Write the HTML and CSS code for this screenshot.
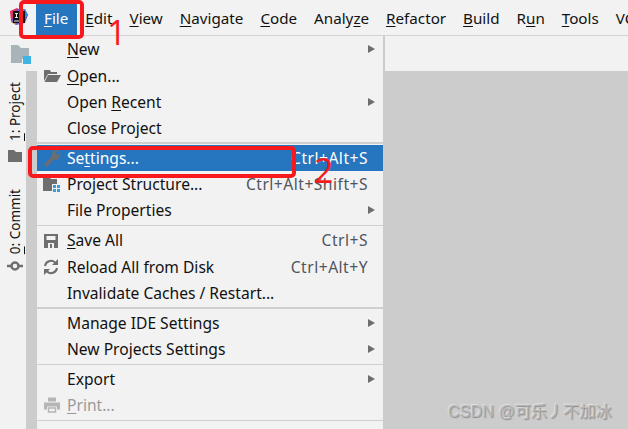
FILE: index.html
```html
<!DOCTYPE html>
<html lang="en">
<head>
<meta charset="utf-8">
<title>File menu</title>
<link rel="stylesheet" href="styles.css">
</head>
<body>
<div class="ide">
  <header class="menubar">
    <svg class="logo" width="20" height="18" viewBox="0 0 20 18"><path d="M1 3 8 0l5 3-6 12-5-2z" fill="#e0355f"/><path d="M8 1h8l3 6-3 8-9 2-5-3z" fill="#6b57d2"/><path d="M13 1h3l3 6-3 3z" fill="#2a8fd8"/><path d="M2 13l3 3h2z" fill="#f0a030"/><rect x="4" y="3" width="12" height="12" fill="#111"/><rect x="5" y="12.500" width="6" height="1" fill="#eee"/><rect x="6" y="5" width="3" height="1" fill="#eee"/><rect x="7" y="5" width="1" height="5" fill="#eee"/><rect x="6" y="9" width="3" height="1" fill="#eee"/><rect x="10" y="5" width="3" height="1" fill="#eee"/><rect x="12" y="5" width="1" height="5" fill="#eee"/></svg>
    <nav class="menus">
      <span class="menu active"><u>F</u>ile</span>
      <span class="menu"><u>E</u>dit</span>
      <span class="menu"><u>V</u>iew</span>
      <span class="menu"><u>N</u>avigate</span>
      <span class="menu"><u>C</u>ode</span>
      <span class="menu">Analy<u>z</u>e</span>
      <span class="menu"><u>R</u>efactor</span>
      <span class="menu"><u>B</u>uild</span>
      <span class="menu">R<u>u</u>n</span>
      <span class="menu"><u>T</u>ools</span>
      <span class="menu">VC<u>S</u></span>
    </nav>
  </header>
  <div class="body">
    <aside class="rail">
      <div class="rail-top">
        <svg width="22" height="20" viewBox="0 0 22 20"><path d="M1 1h7l3 3h8v11h-7v4H1z" fill="#a9b4ba"/><rect x="13" y="12" width="8" height="8" fill="#41b4e6"/></svg>
      </div>
      <div class="tab tab-project"><span class="vtext"><u>1</u>: Project</span></div>
      <svg class="rail-folder" width="16" height="14" viewBox="0 0 16 14"><path d="M1 1h6l2 2h6v10H1z" fill="#6e6e6e"/></svg>
      <div class="tab tab-commit"><span class="vtext"><u>0</u>: Commit</span></div>
      <svg class="rail-commit" width="18" height="10" viewBox="0 0 18 10"><path d="M1 5h16" stroke="#6e6e6e" stroke-width="2.500"/><circle cx="9" cy="5" r="3.500" fill="#f2f2f2" stroke="#6e6e6e" stroke-width="2.500"/></svg>
    </aside>
    <div class="gutter"></div>
    <section class="dropdown">
      <div class="item"><span class="label"><u>N</u>ew</span><i class="arrow"></i></div>
      <div class="item"><svg class="icon" width="18" height="14" viewBox="0 0 18 14"><path d="M1 1h6l1 2h6v2H5L1 12z" fill="#6e6e6e"/><path d="M5 6h13l-4 7H1.500z" fill="#6e6e6e"/></svg><span class="label"><u>O</u>pen...</span></div>
      <div class="item"><span class="label">Open <u>R</u>ecent</span><i class="arrow"></i></div>
      <div class="item"><span class="label">Close Project</span></div>
      <hr class="sep thick">
      <div class="item selected"><svg class="icon" width="18" height="18" viewBox="0 0 17 17"><path d="M1 14.500 8.500 7C8 3.500 10.500 .500 15 1l-3 3 1 2 3.500-2c.5 4-3 7-6.500 6L3.500 17z" fill="#6e6e6e"/></svg><span class="label">Se<u>t</u>tings...</span><span class="key">Ctrl+Alt+S</span></div>
      <div class="item"><svg class="icon" width="18" height="16" viewBox="0 0 18 16"><path d="M0 1h6l2 2h6v5H9v7H0z" fill="#6e6e6e"/><path d="M10 9h3v3h-3zM14 9h3v3h-3zM10 13h3v3h-3zM14 13h3v3h-3z" fill="#3f9bd8"/></svg><span class="label">Project Structure...</span><span class="key">Ctrl+Alt+Shift+S</span></div>
      <div class="item"><span class="label">File Properties</span><i class="arrow"></i></div>
      <hr class="sep">
      <div class="item"><svg class="icon" width="16" height="16" viewBox="0 0 16 16"><path d="M1 1h14v14H1z" fill="#6e6e6e"/><path d="M3.500 3h9v4h-9zM5 10h6v5H5z" fill="#f2f2f2"/><path d="M7 11h2v4H7z" fill="#6e6e6e"/></svg><span class="label"><u>S</u>ave All</span><span class="key">Ctrl+S</span></div>
      <div class="item"><svg class="icon" width="16" height="16" viewBox="0 0 16 16"><path d="M2 7a6 6 0 0 1 10-3.500M14 9a6 6 0 0 1-10 3.500" fill="none" stroke="#6e6e6e" stroke-width="2"/><path d="M9 6h6V0zM7 10H1v6z" fill="#6e6e6e"/></svg><span class="label">Reload All from Disk</span><span class="key">Ctrl+Alt+Y</span></div>
      <div class="item"><span class="label">Invalidate Caches / Restart...</span></div>
      <hr class="sep thick">
      <div class="item"><span class="label">Manage IDE Settings</span><i class="arrow"></i></div>
      <div class="item"><span class="label">New Projects Settings</span><i class="arrow"></i></div>
      <hr class="sep">
      <div class="item"><span class="label">Export</span><i class="arrow"></i></div>
      <div class="item disabled"><svg class="icon" width="18" height="17" viewBox="0 0 18 17"><path d="M5 1h8v4H5zM1 6h16v7h-3v-3H4v3H1z" fill="#b5b5b5"/><path d="M5.500 11.500h7v4h-7z" fill="none" stroke="#b5b5b5" stroke-width="1.500"/></svg><span class="label"><u>P</u>rint...</span></div>
      <hr class="sep">
    </section>
    <main class="editor">
      <div class="toolbar"></div>
      <div class="canvas"></div>
    </main>
  </div>
  <div class="mark mark-file"></div>
  <div class="mark mark-settings"></div>
  <span class="num num-1">1</span>
  <span class="num num-2">2</span>
  <span class="watermark">CSDN @可乐丿不加冰</span>
</div>
</body>
</html>
```
FILE: styles.css
```css
* { box-sizing: border-box; }
html, body { margin: 0; padding: 0; }
body { background: #f2f2f2; font-family: "Noto Sans", "Open Sans", sans-serif; color: #111; }
.ide { position: relative; width: 628px; height: 429px; overflow: hidden; background: #f2f2f2; font-size: 15.600px; }
u { text-underline-offset: 2px; text-decoration-thickness: 1px; }

.menubar { height: 36px; display: flex; align-items: center; border-bottom: 1px solid #d4d4d4; }
.logo { margin-left: 9px; margin-top: -2px; flex: none; }
.menus { display: flex; margin-left: 6.500px; height: 35px; white-space: nowrap; font-size: 15.200px; }
.menu { padding: 0 8.500px; height: 35px; line-height: 37px; }
.menu.active { background: #2675bf; color: #fff; }

.body { display: flex; height: 393px; }
.rail { width: 26px; flex: none; display: flex; flex-direction: column; align-items: center; padding-left: 4px; }
.rail-top { height: 35px; width: 36px; flex: none; display: flex; justify-content: center; align-items: center; margin-left: 12px; }
.tab { display: flex; justify-content: center; flex: none; }
.vtext { writing-mode: vertical-rl; transform: rotate(180deg); font-size: 13.500px; white-space: nowrap; line-height: 22px; }
.tab-project { margin-top: 11px; }
.rail-folder { margin-top: 8px; flex: none; }
.tab-commit { margin-top: 26px; }
.rail-commit { margin-top: 7px; flex: none; }

.gutter { width: 11px; flex: none; background: #cccccc; margin-top: 35px; }
.dropdown { width: 346px; flex: none; height: 393px; background: #f2f2f2; padding-top: .600px; }
.item { height: 26.200px; display: flex; align-items: center; position: relative; padding: 0 15px .400px 30px; white-space: nowrap; }
.label { flex: 1; }
.key { color: #50555c; letter-spacing: .5px; }
.item.selected { background: #2675bf; color: #fff; }
.item.selected .key { color: #fff; }
.item.disabled { color: #9a9a9a; }
.icon { position: absolute; left: 6px; top: 50%; transform: translateY(-50%); }
.arrow { width: 0; height: 0; margin-right: -7px; border-left: 7.500px solid #6e6e6e; border-top: 4.500px solid transparent; border-bottom: 4.500px solid transparent; }
.sep { border: 0; margin: 1.400px 0; height: 1px; background: #cfcfcf; }
.sep.thick { height: 2px; margin: .900px 0; }

.editor { flex: 1; display: flex; flex-direction: column; border-left: 2px solid #cccccc; }
.toolbar { height: 35px; flex: none; background: #f2f2f2; }
.canvas { flex: 1; background: #cccccc; }

.mark { position: absolute; border: 4px solid #f8191c; border-radius: 5px; }
.mark-file { left: 19px; top: 0; width: 65px; height: 39px; }
.mark-settings { left: 28px; top: 146px; width: 268px; height: 32px; }
.num { position: absolute; color: #f8191c; font-family: "Open Sans", sans-serif; font-size: 34px; line-height: 1; }
.num-1 { left: 107px; top: 15px; }
.num-2 { left: 314px; top: 153px; }
.watermark { position: absolute; left: 448px; top: 398px; font-size: 16px; color: #b8b8b8; text-shadow: 1px 1px 1px #8a8a8a, -1px -1px 0 #e2e2e2; font-family: "Liberation Sans", "Noto Sans CJK SC", sans-serif; white-space: nowrap; letter-spacing: .15px; }
```
